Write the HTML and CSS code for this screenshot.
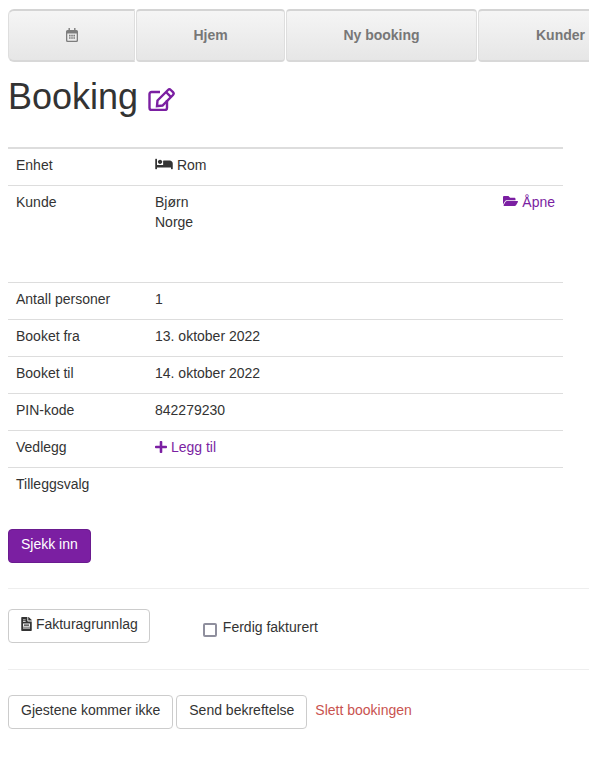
FILE: index.html
```html
<!DOCTYPE html>
<html lang="no">
<head>
<meta charset="utf-8">
<title>Booking</title>
<link rel="stylesheet" href="styles.css">
</head>
<body>
<nav class="tabs">
  <a class="tab tab-cal"><svg class="ico-cal" viewBox="0 0 12 14"><path d="M2.500 0h1.400v2h4.200V0h1.400v2h1A1.500 1.500 0 0 1 12 3.500v9a1.500 1.500 0 0 1-1.500 1.500h-9A1.500 1.500 0 0 1 0 12.500v-9A1.500 1.500 0 0 1 1.500 2h1zM1.300 5.500v6.800c0 .2.2.4.4.4h8.600c.2 0 .4-.2.4-.4V5.500z" fill-rule="evenodd"/><path d="M3 6.800h1.600v1.600H3zm2.200 0h1.600v1.600H5.200zm2.200 0H9v1.600H7.400zM3 9.200h1.600v1.600H3zm2.200 0h1.600v1.600H5.200zm2.200 0H9v1.600H7.400z"/></svg></a>
  <a class="tab tab-home">Hjem</a>
  <a class="tab tab-new">Ny booking</a>
  <a class="tab tab-cust">Kunder</a>
</nav>
<h1 class="title">Booking <svg class="ico-edit" viewBox="0 0 27 24"><path d="M12 5H3.500a2 2 0 0 0-2 2v14a2 2 0 0 0 2 2H17a2 2 0 0 0 2-2v-8"/><path d="M9.500 13.500L20 3a2 2 0 0 1 2.800 0L25 5.200a2 2 0 0 1 0 2.800L14.500 18.500 9 19.200zM18 5l4.800 4.800"/></svg></h1>
<table class="info">
  <tr><th>Enhet</th><td><svg class="ico-bed" viewBox="0 0 640 512"><path d="M176 256c44 0 80-36 80-80s-36-80-80-80-80 36-80 80 36 80 80 80zm352-128H304c-9 0-16 7-16 16v144H64V80c0-9-7-16-16-16H16C7 64 0 71 0 80v352c0 9 7 16 16 16h32c9 0 16-7 16-16v-48h512v48c0 9 7 16 16 16h32c9 0 16-7 16-16V240c0-62-50-112-112-112z"/></svg> Rom</td></tr>
  <tr class="tall"><th>Kunde</th><td><div class="split"><div>Bjørn<br>Norge</div><a class="link"><svg class="ico-folder" viewBox="0 0 576 512"><path d="M572.700 292.100l-72.400 124.100C488.800 435.800 467.700 448 445 448H45c-18.500 0-30.100-20.100-20.700-36.100l72.400-124.100C108.200 268.200 129.300 256 152 256h400c18.500 0 30.100 20.100 20.700 36.100zM152 224h328v-48c0-26.500-21.500-48-48-48H272l-64-64H48C21.500 64 0 85.500 0 112v278l69.100-118.400C86.200 242.300 118 224 152 224z"/></svg> Åpne</a></div></td></tr>
  <tr><th>Antall personer</th><td>1</td></tr>
  <tr><th>Booket fra</th><td>13. oktober 2022</td></tr>
  <tr><th>Booket til</th><td>14. oktober 2022</td></tr>
  <tr><th>PIN-kode</th><td>842279230</td></tr>
  <tr><th>Vedlegg</th><td><a class="link"><svg class="ico-plus" viewBox="0 0 448 512"><path d="M416 208H272V64c0-18-14-32-32-32h-32c-18 0-32 14-32 32v144H32c-18 0-32 14-32 32v32c0 18 14 32 32 32h144v144c0 18 14 32 32 32h32c18 0 32-14 32-32V304h144c18 0 32-14 32-32v-32c0-18-14-32-32-32z"/></svg> Legg til</a></td></tr>
  <tr><th>Tilleggsvalg</th><td></td></tr>
</table>
<button class="btn btn-primary" type="button">Sjekk inn</button>
<hr class="rule rule-a">
<div class="invoice">
  <button class="btn btn-invoice" type="button"><svg class="ico-file" viewBox="0 0 384 512"><path d="M224 136V0H24C11 0 0 11 0 24v464c0 13 11 24 24 24h336c13 0 24-11 24-24V160H248c-13 0-24-11-24-24zm160-14v6H256V0h6c6 0 12 3 17 7l98 98c4 5 7 11 7 17zM64 240h256v112H64zm32 32v48h192v-48zM64 384h256v32H64zm0-232h96v32H64zm0-64h96v32H64z" fill-rule="evenodd"/></svg> Fakturagrunnlag</button>
  <label class="check"><span class="box"></span><span class="check-text">Ferdig fakturert</span></label>
</div>
<hr class="rule rule-b">
<div class="actions">
  <button class="btn" type="button">Gjestene kommer ikke</button>
  <button class="btn" type="button">Send bekreftelse</button>
  <a class="danger">Slett bookingen</a>
</div>
</body>
</html>
```

FILE: styles.css
```css
html, body { margin: 0; padding: 0; background: #fff; }
body {
  width: 589px;
  height: 782px;
  overflow: hidden;
  padding: 9px 0 0 8px;
  box-sizing: border-box;
  font: 14px/20px "Liberation Sans", Arial, sans-serif;
  color: #333;
}
.tabs {
  display: flex;
  width: 581px;
  height: 53px;
  box-sizing: border-box;
  overflow: hidden;
}
.tab {
  display: flex;
  align-items: center;
  justify-content: center;
  box-sizing: border-box;
  height: 53px;
  padding-bottom: 2px;
  border: 1px solid #dedede;
  border-top: 2px solid #d4d4d4;
  border-bottom: 2px solid #d8d8d8;
  border-radius: 4px;
  margin-right: 1px;
  background: linear-gradient(#f5f5f5, #e6e6e6);
  color: #777;
  font-weight: bold;
  flex: none;
}
.tab-cal { width: 127px; border-radius: 6px 0 0 6px; }
.tab-home { width: 149px; }
.tab-new { width: 191px; }
.tab-cust { width: 165px; }
.ico-cal { width: 12px; height: 14px; fill: #7d7d7d; }
.title {
  margin: 13px 0 0;
  font-size: 36px;
  line-height: 44px;
  font-weight: 500;
  color: #333;
}
.ico-edit {
  width: 27px;
  height: 24px;
  fill: none;
  stroke: #7b1fa2;
  stroke-width: 2.4;
  vertical-align: -2px;
}
.info {
  width: 555px;
  margin-top: 28px;
  border-collapse: collapse;
  border-top: 2px solid #ddd;
}
.info th, .info td {
  padding: 6px 8px 10px;
  text-align: left;
  font-weight: normal;
  vertical-align: top;
  border-top: 1px solid #ddd;
  height: 20px;
}
.info tr:first-child th, .info tr:first-child td { border-top: 0; }
.info th { width: 123px; }
.tall td { height: 80px; }
.split { display: flex; justify-content: space-between; }
.link { color: #7b1fa2; }
.ico-bed { width: 18px; height: 14px; fill: #333; vertical-align: -1px; }
.ico-folder { width: 15px; height: 14px; fill: #7b1fa2; vertical-align: -1px; }
.ico-plus { width: 12px; height: 14px; fill: #7b1fa2; vertical-align: -2px; }
.ico-file { width: 11px; height: 14px; fill: #333; vertical-align: -2px; }
.btn {
  display: inline-block;
  box-sizing: border-box;
  height: 34px;
  padding: 4px 12px 8px;
  border: 1px solid #ccc;
  border-radius: 4px;
  background: #fff;
  color: #333;
  font: inherit;
  white-space: nowrap;
}
.btn-invoice { padding-right: 11px; }
.btn-primary {
  margin-top: 25px;
  display: block;
  background: #7b1fa2;
  border-color: #6a1b8f;
  color: #fff;
}
.rule { border: 0; border-top: 1px solid #eee; margin: 0; width: 581px; }
.rule-a { margin-top: 25px; }
.rule-b { margin-top: 26px; }
.invoice { display: flex; margin-top: 20px; height: 34px; }
.check { display: flex; align-items: center; margin: 2px 0 0 53px; height: 34px; }
.check-text { margin-top: -2px; }
.box {
  width: 14px;
  height: 14px;
  box-sizing: border-box;
  border: 2px solid #8f8f9d;
  border-radius: 2px;
  margin: 3px 6px 0 0;
}
.actions { display: flex; align-items: center; gap: 3px; margin-top: 25px; }
.danger { color: #c9534f; margin-left: 5px; padding-bottom: 4px; }
```
